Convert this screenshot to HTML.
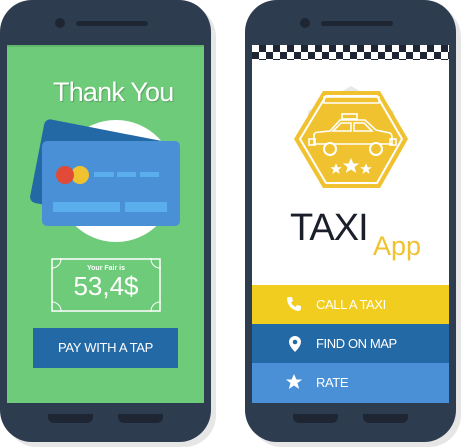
<!DOCTYPE html>
<html><head><style>
body{margin:0;width:462px;height:448px;background:#fff;position:relative;overflow:hidden;font-family:"Liberation Sans",sans-serif}
.ph{position:absolute;top:0;width:211px;height:442px;background:#2e3c50;border-radius:32px;box-shadow:5px 5px 0 #e6e6e6}
.scr{position:absolute;top:45px;width:197px;height:358px}
.b{position:absolute;background:#1f2633}
</style></head><body>
<div class="ph" style="left:0"></div>
<div class="ph" style="left:245px"></div>
<div class="b" style="left:55px;top:18px;width:10px;height:10px;border-radius:50%"></div>
<div class="b" style="left:76px;top:21px;width:72px;height:5px;border-radius:3px"></div>
<div class="b" style="left:48px;top:414px;width:45px;height:9px;border-radius:0 0 6px 6px"></div>
<div class="b" style="left:118px;top:414px;width:45px;height:9px;border-radius:0 0 6px 6px"></div>
<div class="scr" style="left:7px;background:#6dcb79;border-top:2px solid #5fb86b;box-sizing:border-box"></div>
<div style="position:absolute;left:53px;top:77px;font-size:27px;color:#fff;letter-spacing:-0.8px;text-shadow:1px 1px 1px rgba(0,0,0,.2)">Thank You</div>
<div style="position:absolute;left:56px;top:120px;width:120px;height:122px;border-radius:50%;background:#fff"></div>
<div style="position:absolute;left:36px;top:130px;width:130px;height:85px;background:#2369a6;border-radius:6px;transform:rotate(11deg);transform-origin:center"></div>
<div style="position:absolute;left:42px;top:141px;width:138px;height:85px;background:#4a90d6;border-radius:5px"></div>
<div style="position:absolute;left:71px;top:166px;width:18px;height:18px;border-radius:50%;background:#f0c22f"></div>
<div style="position:absolute;left:56px;top:166px;width:18px;height:18px;border-radius:50%;background:#e04a37"></div>
<div style="position:absolute;left:94px;top:172px;width:20px;height:5px;background:#5aaeec"></div>
<div style="position:absolute;left:117px;top:172px;width:19px;height:5px;background:#5aaeec"></div>
<div style="position:absolute;left:140px;top:172px;width:19px;height:5px;background:#5aaeec"></div>
<div style="position:absolute;left:53px;top:202px;width:67px;height:10px;background:#5aaeec"></div>
<div style="position:absolute;left:125px;top:202px;width:42px;height:10px;background:#5aaeec"></div>
<svg style="position:absolute;left:51px;top:258px" width="110" height="54"><rect x="1" y="1" width="108" height="52" fill="none" stroke="#fff" stroke-width="1.5"/><g fill="none" stroke="#fff" stroke-width="1"><circle cx="1" cy="1" r="9"/><circle cx="109" cy="1" r="9"/><circle cx="1" cy="53" r="9"/><circle cx="109" cy="53" r="9"/></g></svg>
<div style="position:absolute;left:52px;top:265px;width:108px;text-align:center;font-size:7px;font-weight:bold;color:#fff">Your Fair is</div>
<div style="position:absolute;left:52px;top:271px;width:108px;text-align:center;font-size:26px;color:#fff">53,4$</div>
<div style="position:absolute;left:33px;top:328px;width:145px;height:40px;background:#2369a6;color:#fff;font-size:13px;line-height:40px;text-align:center;letter-spacing:-0.3px">PAY WITH A TAP</div>
<div class="b" style="left:300px;top:18px;width:10px;height:10px;border-radius:50%"></div>
<div class="b" style="left:321px;top:21px;width:72px;height:5px;border-radius:3px"></div>
<div class="b" style="left:293px;top:414px;width:45px;height:9px;border-radius:0 0 6px 6px"></div>
<div class="b" style="left:363px;top:414px;width:45px;height:9px;border-radius:0 0 6px 6px"></div>
<div class="scr" style="left:252px;background:#fff"></div>
<div style="position:absolute;left:252px;top:45px;width:197px;height:15px;background:
conic-gradient(#1f2633 25%,#fff 0 50%,#1f2633 0 75%,#fff 0) 0 0/14px 14px"></div>
<svg style="position:absolute;left:290px;top:80px" width="124" height="120" viewBox="0 0 124 120">
<polygon points="61,6 104,31 104,83 61,108 18,83 18,31" fill="#e8e8ea"/>
<polygon points="33,11 90,11 118,59 90,108 33,108 4,59" fill="#f0c22f"/>
<polygon points="36,16 87,16 112,59 87,103 36,103 10,59" fill="none" stroke="#fff" stroke-width="2"/>
<rect x="34" y="17" width="55" height="6" fill="none" stroke="#fff" stroke-width="1.5"/>
<g fill="none" stroke="#fff" stroke-width="1.6">
<rect x="52" y="34" width="15" height="5"/>
<path d="M24 64 V55 Q24 52 30 52 L40 51 L50 40 H75 L86 50 L100 53 Q102 54 102 58 V64 Z"/>
<path d="M43 51 L51 43 H61 V51 Z M64 43 H74 L82 51 H64 Z"/>
<rect x="19" y="59" width="6" height="6"/><rect x="100" y="59" width="6" height="6"/>
</g>
<circle cx="40" cy="69" r="6" fill="#f0c22f" stroke="#fff" stroke-width="2"/>
<circle cx="86" cy="69" r="6" fill="#f0c22f" stroke="#fff" stroke-width="2"/>
<g fill="#fff">
<path transform="translate(46,89) scale(.7)" d="M0-8 L2.4-2.5 8.2-2.5 3.5 1 5.2 7 0 3.5 -5.2 7 -3.5 1 -8.2-2.5 -2.4-2.5Z"/>
<path transform="translate(61,86)" d="M0-8 L2.4-2.5 8.2-2.5 3.5 1 5.2 7 0 3.5 -5.2 7 -3.5 1 -8.2-2.5 -2.4-2.5Z"/>
<path transform="translate(76,89) scale(.7)" d="M0-8 L2.4-2.5 8.2-2.5 3.5 1 5.2 7 0 3.5 -5.2 7 -3.5 1 -8.2-2.5 -2.4-2.5Z"/>
</g></svg>
<div style="position:absolute;left:290px;top:207px;font-size:38px;color:#1a1f29;letter-spacing:-1px">TAXI</div>
<div style="position:absolute;left:373px;top:231px;font-size:27px;color:#f0c22f">App</div>
<div style="position:absolute;left:252px;top:285px;width:197px;height:39px;background:#f0cd1f"></div>
<div style="position:absolute;left:252px;top:324px;width:197px;height:39px;background:#2369a6"></div>
<div style="position:absolute;left:252px;top:363px;width:197px;height:40px;background:#4a90d6"></div>
<div style="position:absolute;left:316px;top:297px;font-size:13px;color:#fff;letter-spacing:-0.4px">CALL A TAXI</div>
<div style="position:absolute;left:316px;top:336px;font-size:13px;color:#fff;letter-spacing:-0.4px">FIND ON MAP</div>
<div style="position:absolute;left:316px;top:375px;font-size:13px;color:#fff;letter-spacing:-0.4px">RATE</div>
<svg style="position:absolute;left:286px;top:296px" width="16" height="16" viewBox="0 0 16 16"><path fill="#fff" d="M3 1 L6 1 L7 5 L5 6.5 Q6.5 9.5 9.5 11 L11 9 L15 10 V13 Q14 15 12 15 Q2 13 1 3 Q1 1 3 1Z"/></svg>
<svg style="position:absolute;left:288px;top:335px" width="14" height="18" viewBox="0 0 14 18"><path fill="#fff" d="M7 1 A6 6 0 0 1 13 7 Q13 11 7 17 Q1 11 1 7 A6 6 0 0 1 7 1Z"/><circle cx="7" cy="7" r="2.3" fill="#2369a6"/></svg>
<svg style="position:absolute;left:286px;top:374px" width="16" height="16" viewBox="-8 -8 16 16"><path fill="#fff" d="M0-8 L2.4-2.5 8.2-2.5 3.5 1 5.2 7 0 3.5 -5.2 7 -3.5 1 -8.2-2.5 -2.4-2.5Z"/></svg>
</body></html>
